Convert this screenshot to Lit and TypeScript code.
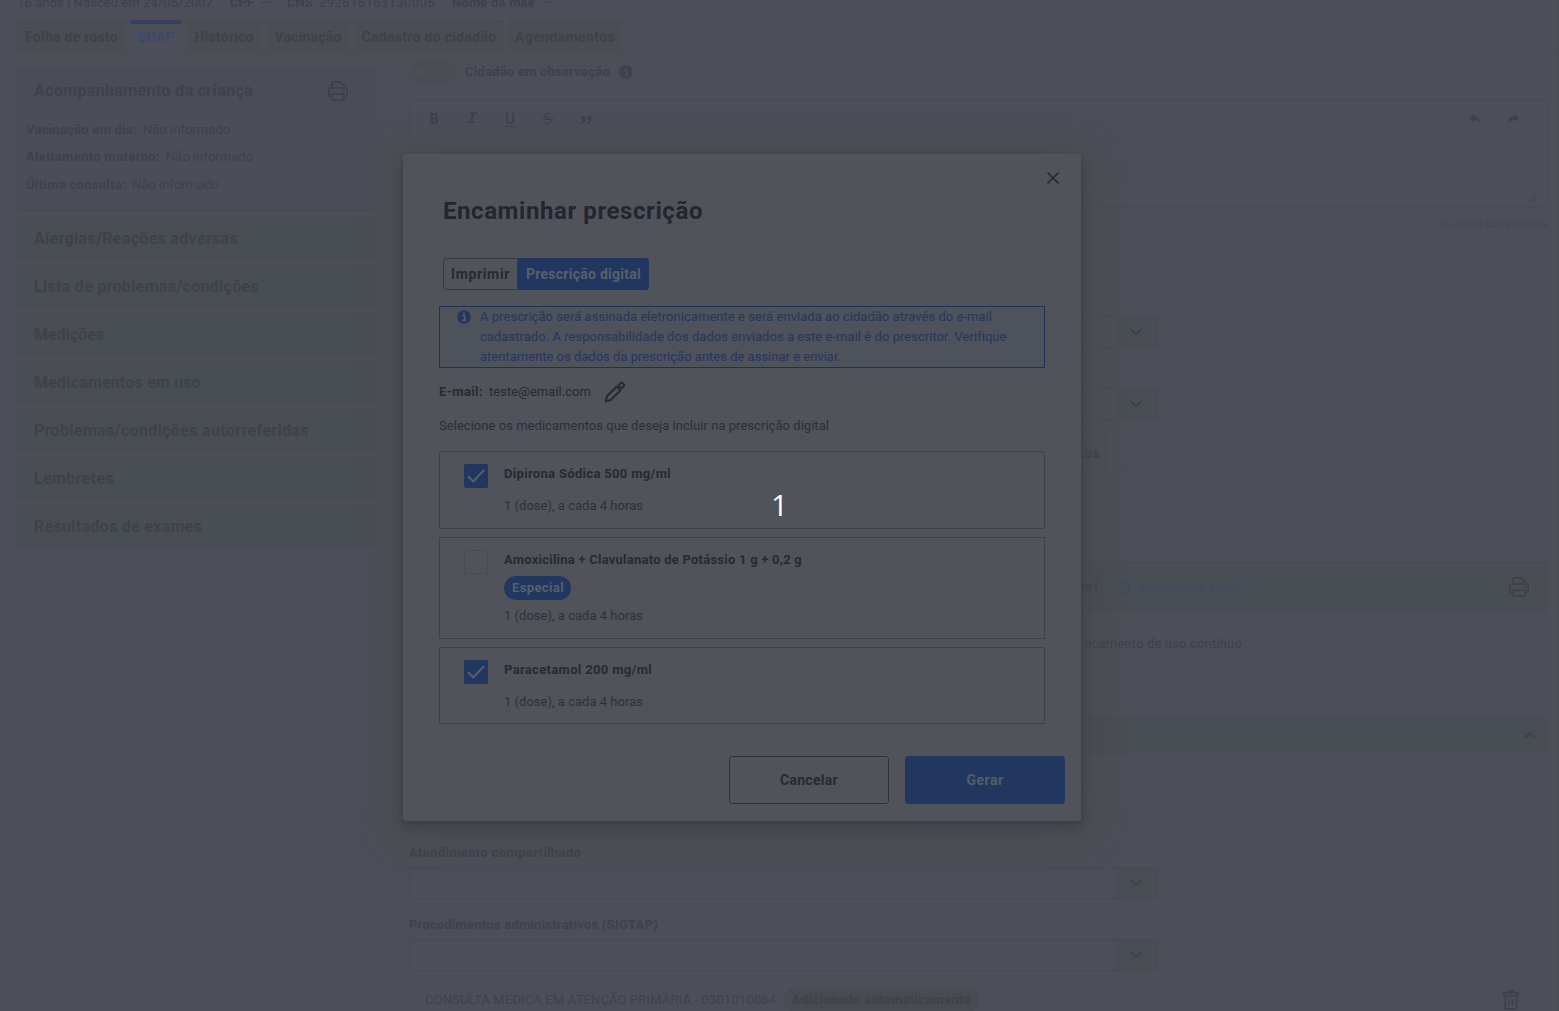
import { LitElement, html, css, svg, nothing } from "lit";
import { customElement, property } from "lit/decorators.js";

/** One line of text, tracked so that it spans a given width. */
@customElement("fit-text")
class FitText extends LitElement {
  @property({ type: Number }) w = 0;
  @property() text = "";

  static styles = css`
    :host { display: inline-block; white-space: nowrap; }
    .run { display: inline-block; }
  `;

  updated() {
    const run = this.renderRoot.querySelector(".run") as HTMLElement;
    run.style.letterSpacing = "0px";
    const natural = run.getBoundingClientRect().width;
    const spacing = (this.w - natural) / this.text.length;
    run.style.letterSpacing = `${spacing.toFixed(3)}px`;
  }

  render() {
    return html`<span class="run">${this.text}</span>`;
  }
}

const t = (text: string, w: number, cls = "") =>
  html`<fit-text class=${cls} .text=${text} .w=${w}></fit-text>`;

const printer = html`<svg class="ico" width="22" height="22" viewBox="0 0 22 22">
  <path d="M5 7.500V3.200Q5 2 6.200 2H13l4 3.600v1.900M5 16.500H3.200Q2 16.500 2 15.300V9.500Q2 8 3.500 8h15Q20 8 20 9.500v5.800q0 1.200-1.200 1.200H17M5 14h12v4.800q0 1.200-1.200 1.200H6.200Q5 20 5 18.800z"
    fill="none" stroke="currentColor" stroke-width="1.800" stroke-linejoin="round" />
  <circle cx="17" cy="11" r="1" fill="currentColor" /></svg>`;

const info = html`<svg class="ico" width="14" height="14" viewBox="0 0 14 14">
  <circle cx="7" cy="7" r="6.700" fill="currentColor" />
  <path class="cut" d="M5.500 6h2.300v4M5.300 10.300h3.800" fill="none" stroke-width="1.400" />
  <circle class="dot" cx="7" cy="3.500" r="1.100" /></svg>`;

const chevron = (up = false) => html`<svg class="ico" width="14" height="10" viewBox="0 0 14 10">
  ${up
    ? svg`<path d="M2.500 7.500 7 3l4.500 4.500" fill="none" stroke="currentColor" stroke-width="1.800"/>`
    : svg`<path d="M1.500 2 7 7.500 12.500 2" fill="none" stroke="currentColor" stroke-width="1.800"/>`}</svg>`;

const check = html`<svg width="24" height="24" viewBox="0 0 24 24">
  <path d="M4 12.200 9.300 17.500 20 6" fill="none" stroke="#56606a" stroke-width="2" /></svg>`;

const undo = (flip = false) => html`<svg class=${flip ? "ico flip" : "ico"} width="12" height="12" viewBox="0 0 12 12">
  <path d="M5 .8V3.300c4 0 6.200 2 6 7.700C10 8 8.500 7 5 7v2.300L.6 5z" fill="currentColor" /></svg>`;

const pencil = html`<svg class="ico" width="22" height="22" viewBox="0 0 22 22">
  <path d="M1.800 20.200 3 15.300 12.800 5.500l3.700 3.700L6.700 19z" fill="none" stroke="currentColor" stroke-width="2" stroke-linejoin="round" />
  <rect x="15.300" y="2" width="4.600" height="4.600" rx="1.400" transform="rotate(45 17.600 4.300)" fill="none" stroke="currentColor" stroke-width="1.900" /></svg>`;

const trash = html`<svg class="ico" width="16" height="20" viewBox="0 0 16 20">
  <path d="M5.500 2.500V1h5v1.500M1 3h14v3H1zM2.300 6v11.500Q2.300 19 3.800 19h8.400q1.500 0 1.500-1.500V6M6.200 9.500V16M9.800 9.500V16"
    fill="none" stroke="currentColor" stroke-width="1.900" /></svg>`;

const tabs: [string, number, number][] = [
  ["Folha de rosto", 93, 109],
  ["SOAP", 37, 52],
  ["Histórico", 59, 76],
  ["Vacinação", 67, 84],
  ["Cadastro do cidadão", 135, 150],
  ["Agendamentos", 100, 114],
];

const sections: [string, number][] = [
  ["Alergias/Reações adversas", 204],
  ["Lista de problemas/condições", 225],
  ["Medições", 70],
  ["Medicamentos em uso", 167],
  ["Problemas/condições autorreferidas", 275],
  ["Lembretes", 80],
  ["Resultados de exames", 168],
];

const facts: [string, number, number][] = [
  ["Vacinação em dia:", 111, 87],
  ["Aleitamento materno:", 134, 87],
  ["Última consulta:", 100, 87],
];

const meds = [
  { name: "Dipirona Sódica 500 mg/ml", w: 167, on: true, special: false },
  { name: "Amoxicilina + Clavulanato de Potássio 1 g + 0,2 g", w: 298, on: false, special: true },
  { name: "Paracetamol 200 mg/ml", w: 148, on: true, special: false },
];

@customElement("app-root")
class AppRoot extends LitElement {
  static styles = css`
    :host {
      display: block; width: 1559px; height: 1011px; position: relative; overflow: hidden;
      font-family: Roboto, "Noto Sans", sans-serif; font-size: 13px; line-height: 20px;
      background: #4c4f57; color: #3f414c;
    }
    * { box-sizing: border-box; }
    svg { display: block; flex: none; }
    .page { width: 1559px; height: 1011px; display: flex; flex-direction: column; overflow: hidden; border-right: 2px solid #4a4d52; }
    .patient { height: 20px; flex: none; padding-left: 17px; display: flex; margin-top: -7px; }
    .patient fit-text + fit-text { margin-left: 6px; }
    .patient .gap { margin-left: 17px !important; }
    .b { font-weight: 700; }
    .tabs { height: 33px; flex: none; margin-top: 7px; padding-left: 17px; display: flex; gap: 4px; border-bottom: 1px solid #4b4e52; }
    .tab { display: flex; justify-content: center; align-items: center; height: 32px; font-size: 14px; font-weight: 700; background: #4a4d53; border-top: 1px solid #474952; border-radius: 3px 3px 0 0; }
    .tab.on { background: #4c4f57; border-top: 4px solid #344161; color: #3c4a69; padding-bottom: 3px; }
    .cols { display: flex; flex: 1; min-height: 0; }
    .side { width: 393px; flex: none; border-right: 1px solid #4b4e53; padding: 16px 16px 0 17px; display: flex; flex-direction: column; gap: 6px; }
    .card { border: 1px solid #474a52; border-left-color: #494c50; border-right-color: #494c50; border-radius: 3px; background: #494d54; height: 42px; display: flex; align-items: center; padding: 2px 0 0 16px; font-size: 16px; font-weight: 700; flex: none; }
    .first { display: block; height: 142px; padding: 0; background: #4b4e56; }
    .first .head { display: flex; justify-content: space-between; align-items: center; height: 42px; padding: 0 26px 0 16px; background: #4a4d55; }
    .facts { padding: 8px 8px; font-size: 13px; font-weight: 400; display: flex; flex-direction: column; gap: 7.400px; }
    .fact { display: flex; gap: 6px; height: 20px; }
    .main { flex: 1; padding: 7px 9px 0 16px; display: flex; flex-direction: column; min-width: 0; }
    .observe { display: flex; align-items: center; height: 24px; flex: none; }
    .toggle { width: 48px; height: 24px; border-radius: 12px; background: #4a4d53; padding: 4px 6px; margin-right: 8px; }
    .knob { width: 15px; height: 15px; border-radius: 50%; background: #4c4f57; border: 1px solid #494b52; }
    .observe .ico { margin-left: 9px; }
    .cut { stroke: #4c4f57; } .dot { fill: #4c4f57; }
    .editor { height: 107px; flex: none; margin-top: 16px; border: 1px solid #474a50; border-radius: 3px; padding: 0 11px; display: flex; flex-direction: column; }
    .tools { height: 37px; border-bottom: 1px solid #4b4e53; display: flex; align-items: center; padding: 0 17px 0 5px; }
    .tool { width: 16px; margin-right: 22px; display: flex; justify-content: center; font-weight: 700; font-size: 14px; }
    .tool.bo { font-weight: 900; }
    .tool.it { font-family: "Liberation Mono", monospace; font-style: italic; font-size: 16px; }
    .tool.un { text-decoration: underline; text-underline-offset: 2px; font-weight: 500; font-size: 15px; }
    .tool.st { font-family: "Liberation Serif", serif; text-decoration: line-through; font-size: 16px; font-weight: 400; }
    .tool.st::before, .tool.st::after { content: "\\00a0"; font-size: 8px; }
    .tool.qu { font-size: 28px; padding-top: 12px; font-family: "Liberation Serif", serif; }
    .hist { margin-left: auto; display: flex; gap: 26px; }
    .flip { transform: scaleX(-1); }
    .grip { margin: auto -1px 4px auto; }
    .count { text-align: right; margin-top: 7px; height: 20px; flex: none; color: #464951; }
    .select { width: 749px; height: 32px; flex: none; border: 1px solid #474a51; border-radius: 3px; display: flex; justify-content: flex-end; }
    .select .end { width: 41px; background: #494d54; display: flex; justify-content: center; align-items: center; padding-right: 2px; }
    .s1 { margin-top: 82px; } .s2 { margin-top: 40px; }
    .more { display: flex; justify-content: flex-end; align-items: center; width: 698px; height: 33px; margin-top: 16px; border: 1px solid #494c51; padding-right: 6px; font-size: 14px; font-weight: 700; flex: none; }
    .rule { height: 1px; background: #4b4e53; flex: none; }
    .rx { margin-top: 92px; height: 50px; flex: none; border: 1px solid #474a51; border-radius: 3px; background: #494d54; display: flex; align-items: center; padding: 0 17px 0 654px; }
    .rx .clock { margin: 0 10px 0 16px; color: #3f4a60; }
    .rx .when { color: #404a5e; }
    .rx .pr { margin-left: auto; }
    .use { width: 833px; text-align: right; margin-top: 22px; height: 20px; flex: none; }
    .bar { height: 38px; flex: none; margin-top: 62px; background: #494d54; display: flex; justify-content: flex-end; align-items: center; padding-right: 11px; }
    .radios { display: flex; gap: 125px; margin: 52px 0 0 5px; height: 16px; flex: none; }
    .radio { width: 16px; height: 16px; border: 2px solid #454852; border-radius: 50%; }
    .radio.on { border-color: #303c5c; }
    .label { height: 20px; font-weight: 700; flex: none; margin-bottom: 4px; }
    .l1 { margin-top: 21px; } .l2 { margin-top: 16px; }
    .proc { margin-top: 8px; height: 50px; border: 1px solid #4a4d50; flex: none; display: flex; align-items: flex-start; padding: 8px 28px 0 15px; }
    .proc .name { margin-top: 2px; }
    .proc .auto { height: 24px; border-radius: 12px; background: #494b51; padding: 2px 8px; margin-left: 8px; width: 195px; font-weight: 700; }
    .proc .tr { margin: 2px 0 0 auto; }

    .modal { position: absolute; left: 403px; top: 154px; width: 678px; height: 667px; background: #50535a; border-radius: 3px; color: #282a30;
      box-shadow: 0 6px 10px rgba(60,60,74,.75), 0 1px 3px rgba(60,60,74,.7), 0 6px 36px 4px rgba(68,72,70,.75);
      display: flex; flex-direction: column; padding: 17px 16px 17px 36px; }
    .close { align-self: flex-end; margin-right: 5px; }
    .title { height: 30px; line-height: 30px; margin: 11px 0 0 4px; font-size: 24px; font-weight: 700; color: #23262e; }
    .seg { display: flex; margin: 32px 0 0 4px; height: 32px; width: 206px; font-weight: 700; font-size: 14px; border-radius: 3px; overflow: hidden; flex: none; }
    .seg div { display: flex; align-items: center; justify-content: center; }
    .seg .off { width: 75px; border: 1px solid #383a40; border-radius: 3px 0 0 3px; }
    .seg .on { width: 131px; background: #22375f; color: #56606a; }
    .note { width: 606px; height: 62px; margin-top: 16px; border: 1px solid #1f3059; border-radius: 1px; background: #4d525b; display: flex; gap: 9px; padding-left: 17px; color: #26375e; flex: none; }
    .note .ico { margin-top: 3px; }
    .note .cut { stroke: #56606a; } .note .dot { fill: #56606a; }
    .note .lines { display: flex; flex-direction: column; }
    .mail { display: flex; align-items: center; height: 22px; margin-top: 13px; flex: none; gap: 6px; }
    .mail .ico { margin-left: 7px; }
    .ask { height: 20px; margin: 13px 0 15px; flex: none; color: #2d2f36; }
    .meds { width: 606px; display: flex; flex-direction: column; gap: 8px; }
    .med { border: 1px solid #3f414a; border-radius: 1px; height: 78px; display: flex; padding: 12px 0 0 24px; gap: 16px; }
    .med.special { height: 102px; }
    .med:last-child { height: 77px; }
    .box { width: 24px; height: 24px; border: 1px solid #4a4b4e; border-radius: 2px; flex: none; }
    .box.on { border: 0; background: #22375f; }
    .what { display: flex; flex-direction: column; align-items: flex-start; }
    .what .n { font-weight: 700; height: 20px; }
    .what .d { margin-top: 12px; height: 20px; color: #2f3138; }
    .special .d { margin-top: 6px !important; }
    .tag { height: 24px; width: 67px; border-radius: 12px; background: #22375f; color: #56606a; font-weight: 700; padding: 2px 8px; margin-top: 6px; }
    .acts { display: flex; justify-content: flex-end; gap: 16px; margin-top: auto; font-size: 14px; font-weight: 700; }
    .btn { width: 160px; height: 48px; border: 1px solid #303238; border-radius: 3px; display: flex; align-items: center; justify-content: center; }
    .btn.go { border: 0; background: #22375f; color: #525f66; }
    .badge { position: absolute; inset: 0; display: grid; place-items: center; padding-bottom: 2px; color: #fff; font-family: "Open Sans", "Noto Sans", sans-serif; font-size: 30px; pointer-events: none; }
  `;

  private select(cls = "") {
    return html`<div class="select ${cls}"><div class="end">${chevron()}</div></div>`;
  }

  render() {
    return html`
      <div class="page">
        <div class="patient">
          ${t("16 anos | Nasceu em 24/05/2007", 196)}
          ${t("CPF", 24, "b gap")}${t("—", 10)}
          ${t("CNS", 26, "b gap")}${t("292616163130005", 116)}
          ${t("Nome da mãe", 83, "b gap")}${t("—", 10)}
        </div>
        <div class="tabs">
          ${tabs.map(([n, w, tw], i) => html`<div class=${i === 1 ? "tab on" : "tab"} style="width:${tw}px">${t(n, w)}</div>`)}
        </div>
        <div class="cols">
          <div class="side">
            <div class="card first">
              <div class="head">${t("Acompanhamento da criança", 219)}${printer}</div>
              <div class="facts">
                ${facts.map(([n, w, vw]) => html`<div class="fact">${t(n, w, "b")}${t("Não informado", vw)}</div>`)}
              </div>
            </div>
            ${sections.map(([n, w]) => html`<div class="card">${t(n, w)}</div>`)}
          </div>
          <div class="main">
            <div class="observe">
              <div class="toggle"><div class="knob"></div></div>
              ${t("Cidadão em observação", 145, "b")}${info}
            </div>
            <div class="editor">
              <div class="tools">
                <span class="tool bo">B</span><span class="tool it">I</span><span class="tool un">U</span>
                <span class="tool st">S</span><span class="tool qu">”</span>
                <div class="hist">${undo()}${undo(true)}</div>
              </div>
              <svg class="grip" width="8" height="8" viewBox="0 0 8 8"><path d="M.5 7.500l7-7M4.500 7.500l3-3" stroke="currentColor" /></svg>
            </div>
            <div class="count">${t("0/4000 caracteres", 107)}</div>
            ${this.select("s1")}${this.select("s2")}
            <div class="more">${t("tos", 21)}</div>
            <div class="rule"></div>
            <div class="rx">
              ${t("g/ml", 36, "b")}
              <svg class="clock" width="14" height="14" viewBox="0 0 14 14"><circle cx="7" cy="7" r="6" fill="none" stroke="currentColor" stroke-width="1.300" /><path d="M7 3v4l2.500 2" fill="none" stroke="currentColor" stroke-width="1.300" /></svg>
              ${t("Adicionado agora", 101, "when")}
              <span class="pr">${printer}</span>
            </div>
            <div class="use">${t("Medicamento de uso contínuo", 180)}</div>
            <div class="bar">${chevron(true)}</div>
            <div class="radios"><div class="radio on"></div><div class="radio"></div></div>
            <div class="label l1">${t("Atendimento compartilhado", 172)}</div>
            ${this.select()}
            <div class="label l2">${t("Procedimentos administrativos (SIGTAP)", 249)}</div>
            ${this.select()}
            <div class="proc">
              ${t("CONSULTA MEDICA EM ATENÇÃO PRIMÁRIA - 0301010064", 351, "name")}
              <div class="auto">${t("Adicionado automaticamente", 179)}</div>
              <span class="tr">${trash}</span>
            </div>
          </div>
        </div>
      </div>

      <div class="modal">
        <svg class="close" width="14" height="14" viewBox="0 0 14 14"><path d="M1.500 1.500l11 11M12.500 1.500l-11 11" stroke="currentColor" stroke-width="1.700" /></svg>
        <div class="title">${t("Encaminhar prescrição", 260)}</div>
        <div class="seg">
          <div class="off">${t("Imprimir", 59)}</div>
          <div class="on">${t("Prescrição digital", 115)}</div>
        </div>
        <div class="note">
          ${info}
          <div class="lines">
            ${t("A prescrição será assinada eletronicamente e será enviada ao cidadão através do e-mail", 512)}
            ${t("cadastrado. A responsabilidade dos dados enviados a este e-mail é do prescritor. Verifique", 526)}
            ${t("atentamente os dados da prescrição antes de assinar e enviar.", 361)}
          </div>
        </div>
        <div class="mail">${t("E-mail:", 44, "b")}${t("teste@email.com", 102)}${pencil}</div>
        <div class="ask">${t("Selecione os medicamentos que deseja incluir na prescrição digital", 390)}</div>
        <div class="meds">
          ${meds.map((m) => html`<div class="med ${m.special ? "special" : ""}">
            <div class="box ${m.on ? "on" : ""}">${m.on ? check : nothing}</div>
            <div class="what">
              ${t(m.name, m.w, "n")}
              ${m.special ? html`<div class="tag">${t("Especial", 52)}</div>` : nothing}
              ${t("1 (dose), a cada 4 horas", 139, "d")}
            </div>
          </div>`)}
        </div>
        <div class="acts">
          <div class="btn">${t("Cancelar", 58)}</div>
          <div class="btn go">${t("Gerar", 37)}</div>
        </div>
      </div>
      <div class="badge">1</div>
    `;
  }
}
